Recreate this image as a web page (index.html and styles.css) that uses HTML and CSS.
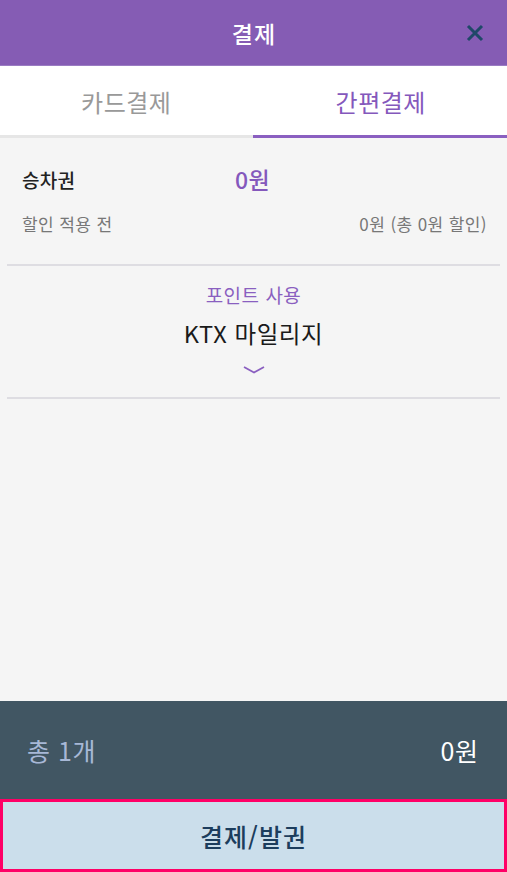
FILE: index.html
```html
<!DOCTYPE html>
<html lang="ko">
<head>
<meta charset="utf-8">
<link rel="stylesheet" href="styles.css">
</head>
<body>
<div class="app">
  <header class="topbar">
    <h1 class="title">결제</h1>
    <button class="close" aria-label="닫기">
      <svg width="18" height="18" viewBox="0 0 18 18"><path d="M2 2L16 16M16 2L2 16" stroke="#1f4868" stroke-width="3" fill="none"/></svg>
    </button>
  </header>
  <nav class="tabs">
    <div class="tab">카드결제</div>
    <div class="tab active">간편결제</div>
  </nav>
  <main class="content">
    <section class="summary">
      <div class="row main-row">
        <span class="label">승차권</span>
        <span class="price">0원</span>
      </div>
      <div class="row sub-row">
        <span>할인 적용 전</span>
        <span class="sub-right">0원 (총 0원 할인)</span>
      </div>
    </section>
    <section class="points">
      <div class="points-label">포인트 사용</div>
      <div class="points-name">KTX 마일리지</div>
      <svg class="chev" width="22" height="8" viewBox="0 0 22 8"><path d="M1 1L11 6.5L21 1" stroke="#8a5fc0" stroke-width="1.8" fill="none"/></svg>
    </section>
  </main>
  <footer class="total">
    <span class="count">총 1개</span>
    <span class="sum">0원</span>
  </footer>
  <button class="pay">결제/발권</button>
</div>
</body>
</html>
```
FILE: styles.css
```css
* { box-sizing: border-box; margin: 0; padding: 0; }
html, body { height: 100%; }
body {
  font-family: "Noto Sans CJK KR", "Noto Sans", sans-serif;
  background: #f5f5f5;
}
.app { display: flex; flex-direction: column; height: 872px; }
.topbar {
  height: 66px;
  background: #855cb4;
  display: flex;
  align-items: center;
  justify-content: center;
  position: relative;
  border-bottom: 1px solid #9a7cc2;
}
.title { color: #fff; font-size: 23px; font-weight: 500; letter-spacing: 1px; padding-left: 1px; }
.close {
  position: absolute;
  right: 23px;
  top: 24px;
  background: none;
  border: 0;
  width: 18px;
  height: 18px;
  display: block;
}
.close svg { display: block; }
.tabs { display: flex; background: #fff; height: 72px; }
.tab {
  flex: 1 1 0;
  display: flex;
  align-items: center;
  justify-content: center;
  font-size: 24px;
  letter-spacing: 0.5px;
  color: #999;
  border-bottom: 3px solid #e6e6e6;
  padding-top: 2px;
}
.tab.active { color: #8458bc; border-bottom-color: #8a5fc0; padding-left: 2px; }
.content { flex: 1; background: #f5f5f5; }
.summary { padding: 26px 21px 0 22px; height: 126px; }
.row { display: flex; align-items: center; }
.main-row { height: 30px; }
.label { font-size: 19px; letter-spacing: 0.3px; color: #222; width: 213px; font-weight: 500; }
.price { font-size: 23px; letter-spacing: 0.5px; color: #8458bc; font-weight: 500; }
.sub-row {
  justify-content: space-between;
  font-size: 17px;
  letter-spacing: 0.4px;
  color: #777;
  margin-top: 17px;
}
.sub-right { margin-right: -1px; }
.points {
  margin: 0 7px;
  border-top: 2px solid #dedde2;
  border-bottom: 2px solid #dedde2;
  height: 135px;
  display: flex;
  flex-direction: column;
  align-items: center;
  padding-top: 17px;
}
.points-label { font-size: 19px; letter-spacing: 0.5px; color: #8a5fc0; line-height: 24px; }
.points-name { font-size: 23.5px; letter-spacing: 0.6px; color: #1a1a1a; line-height: 30px; margin-top: 11px; }
.chev { margin-top: 18px; }
.total {
  height: 98px;
  background: #415663;
  display: flex;
  align-items: center;
  justify-content: space-between;
  padding: 0 29px 0 27px;
  font-size: 25px;
}
.count { color: #a7b8d6; letter-spacing: 0.5px; }
.sum { color: #fff; letter-spacing: 0.5px; margin-right: -0.5px; }
.pay {
  height: 73px;
  background: #cbdeeb;
  border: 3px solid #ff0066;
  font-family: inherit;
  font-size: 25px;
  letter-spacing: 1px;
  font-weight: 500;
  color: #1c3d5d;
  width: 100%;
}
```
